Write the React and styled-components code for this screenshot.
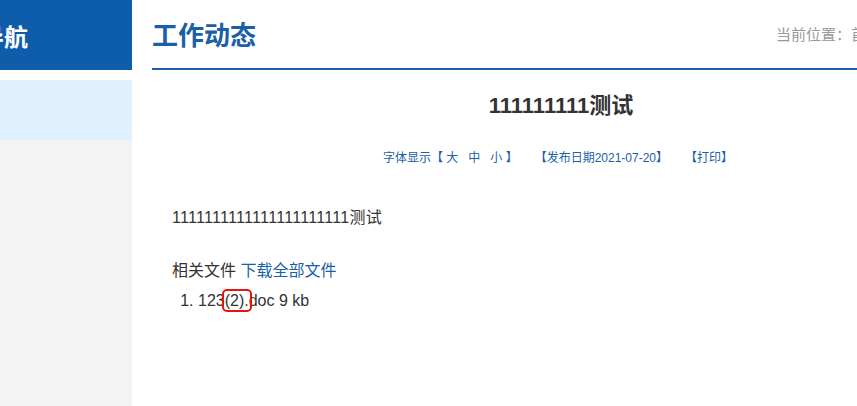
import React from "react";
import styled, { createGlobalStyle } from "styled-components";

const GlobalStyle = createGlobalStyle`
  html, body {
    margin: 0;
    padding: 0;
    overflow: hidden;
    background: #fff;
    font-family: "Liberation Sans", Arial, "Noto Sans CJK SC", sans-serif;
  }
`;

const Page = styled.div`
  display: flex;
  width: 970px;
  height: 406px;
`;

const Sidebar = styled.aside`
  width: 132px;
  flex-shrink: 0;
  display: flex;
  flex-direction: column;
  background: #f3f3f3;
`;

const SideHead = styled.div`
  height: 70px;
  background: #0e5dab;
  color: #fff;
  font-size: 24px;
  font-weight: bold;
  display: flex;
  align-items: center;
  justify-content: flex-end;
  padding-right: 104px;
  overflow: hidden;
  white-space: nowrap;
  border-bottom: 10px solid #fff;
`;

const SideItem = styled.div`
  height: 60px;
  background: ${(p) => (p.active ? "#dff1fd" : "transparent")};
`;

const Main = styled.main`
  flex: 1;
  margin-left: 20px;
`;

const Head = styled.div`
  height: 68px;
  border-bottom: 2px solid #1a5fa8;
  display: flex;
  align-items: center;
  justify-content: space-between;
`;

const Title = styled.h2`
  margin: 0 0 2px;
  font-size: 26px;
  font-weight: bold;
  color: #1a5fa8;
`;

const Location = styled.div`
  font-size: 15px;
  color: #999;
  white-space: nowrap;
  margin-bottom: 2px;
  padding-right: 12px;
`;

const ArticleTitle = styled.h1`
  margin: 21px 0 0;
  text-align: center;
  font-size: 22px;
  line-height: 30px;
  font-weight: bold;
  color: #333;
`;

const Meta = styled.div`
  margin-top: 29px;
  text-align: center;
  font-size: 12px;
  line-height: 16px;
  color: #1a5fa8;
  padding-right: 6px;
`;

const MetaItem = styled.span`
  margin: 0 ${(p) => p.gap || 0}px;
`;

const Body = styled.div`
  padding-left: 20px;
  font-size: 16px;
  color: #333;
`;

const Para = styled.p`
  margin: 42px 0 0;
  line-height: 20px;
  letter-spacing: 0.3px;
`;

const Files = styled.div`
  margin-top: 33px;
  line-height: 20px;
`;

const Link = styled.span`
  color: #1a5fa8;
`;

const FileList = styled.ol`
  margin: 10px 0 0;
  padding-left: 26px;
  line-height: 20px;
  color: #333;
`;

const Mark = styled.span`
  outline: 2px solid #e8130f;
  outline-offset: 1px;
  border-radius: 2px;
`;

export default function App() {
  return (
    <>
      <GlobalStyle />
      <Page>
        <Sidebar>
          <SideHead>栏目导航</SideHead>
          <SideItem active />
        </Sidebar>
        <Main>
          <Head>
            <Title>工作动态</Title>
            <Location>当前位置：首页 &gt; 工作动态</Location>
          </Head>
          <ArticleTitle>111111111测试</ArticleTitle>
          <Meta>
            <MetaItem>字体显示【 大&nbsp;&nbsp;&nbsp;中&nbsp;&nbsp;&nbsp;小 】</MetaItem>
            <MetaItem gap={23}>【发布日期2021-07-20】</MetaItem>
            <MetaItem>【打印】</MetaItem>
          </Meta>
          <Body>
            <Para>1111111111111111111111测试</Para>
            <Files>
              相关文件 <Link>下载全部文件</Link>
            </Files>
            <FileList>
              <li>
                123<Mark>(2).</Mark>doc 9 kb
              </li>
            </FileList>
          </Body>
        </Main>
      </Page>
    </>
  );
}
